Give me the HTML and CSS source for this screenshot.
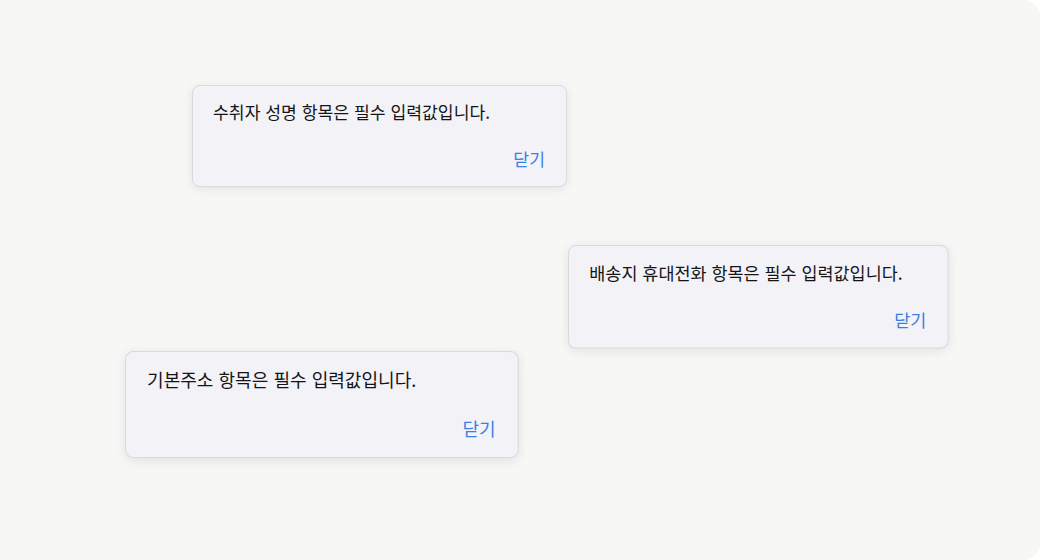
FILE: index.html
```html
<!DOCTYPE html>
<html lang="ko">
<head>
<meta charset="utf-8">
<title>알림</title>
<link rel="stylesheet" href="styles.css">
</head>
<body>
<main class="canvas">
  <div class="toast toast-a" role="alertdialog">
    <p class="toast-msg">수취자 성명 항목은 필수 입력값입니다.</p>
    <div class="toast-actions"><button class="toast-btn">닫기</button></div>
  </div>
  <div class="toast toast-b" role="alertdialog">
    <p class="toast-msg">배송지 휴대전화 항목은 필수 입력값입니다.</p>
    <div class="toast-actions"><button class="toast-btn">닫기</button></div>
  </div>
  <div class="toast toast-c" role="alertdialog">
    <p class="toast-msg">기본주소 항목은 필수 입력값입니다.</p>
    <div class="toast-actions"><button class="toast-btn">닫기</button></div>
  </div>
</main>
</body>
</html>
```

FILE: styles.css
```css
html, body {
  margin: 0;
  padding: 0;
  background: #ffffff;
}
.canvas {
  position: relative;
  width: 1040px;
  height: 560px;
  background: #f7f7f5;
  border-radius: 0 16px 16px 0;
  overflow: hidden;
  font-family: "Noto Sans CJK KR", "Noto Sans", sans-serif;
}
.toast {
  position: absolute;
  box-sizing: border-box;
  width: 375px;
  height: 102px;
  padding: 15px 21px 16px 20px;
  display: flex;
  flex-direction: column;
  justify-content: space-between;
  background: #f2f2f7;
  border: 1px solid #d9d9de;
  border-radius: 8px;
  box-shadow: 0 2px 10px rgba(0, 0, 0, 0.09);
  transform-origin: top left;
}
.toast-a { left: 192px; top: 85px; }
.toast-b { left: 568px; top: 245px; transform: scale(1.015); }
.toast-c { left: 125px; top: 351px; transform: scale(1.05); }
.toast-msg {
  margin: 0;
  font-size: 17.2px;
  line-height: 22px;
  color: #151517;
  white-space: nowrap;
}
.toast-actions {
  display: flex;
  justify-content: flex-end;
}
.toast-btn {
  border: 0;
  background: none;
  padding: 0;
  font: inherit;
  font-size: 17.2px;
  line-height: 22px;
  color: #3b7fe6;
  cursor: pointer;
}
```
